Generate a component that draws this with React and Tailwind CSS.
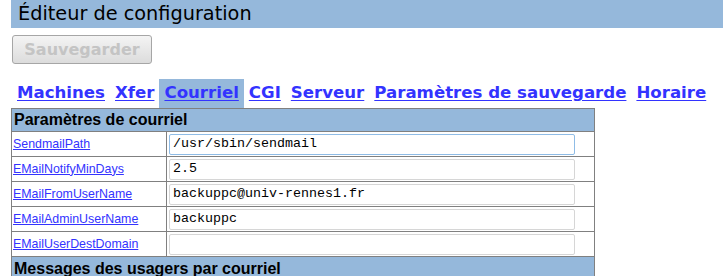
import React from "react";

const rows = [
  { name: "SendmailPath", value: "/usr/sbin/sendmail", focus: true },
  { name: "EMailNotifyMinDays", value: "2.5" },
  { name: "EMailFromUserName", value: "backuppc@univ-rennes1.fr" },
  { name: "EMailAdminUserName", value: "backuppc" },
  { name: "EMailUserDestDomain", value: "" },
];

const tabs = ["Machines", "Xfer", "Courriel", "CGI", "Serveur", "Paramètres de sauvegarde", "Horaire"];

export default function App() {
  return (
    <div className="w-[723px] h-[276px] overflow-hidden bg-white">
      <div className="ml-[11px] h-[28px] bg-[#95b8db] flex items-center pl-[7px] text-[19.3px] text-black leading-none font-['DejaVu_Sans',sans-serif]">
        Éditeur de configuration
      </div>
      <div className="mt-[7px] ml-[12px] w-[140px] h-[29px] rounded-[3px] border border-[#a6a6a6] bg-gradient-to-b from-[#f4f4f4] to-[#dcdcdc] flex items-center justify-center text-[16px] font-bold text-[#c4c4c4] leading-none font-['DejaVu_Sans',sans-serif]">
        Sauvegarder
      </div>
      <div className="mt-[15px] ml-[12px] flex h-[29px] items-stretch whitespace-nowrap font-['DejaVu_Sans',sans-serif] text-[16.6px] font-bold leading-none">
        {tabs.map((t) => (
          <div
            key={t}
            className={
              "flex shrink-0 items-center px-[5px] " + (t === "Courriel" ? "bg-[#95b8db]" : "")
            }
          >
            <a href="#" className="text-[#3333ff] underline underline-offset-[2px]">
              {t}
            </a>
          </div>
        ))}
      </div>
      <div className="ml-[11px] w-[584px] border-t border-l border-r border-[#808080]">
        <div className="h-[23px] bg-[#95b8db] border-b border-[#808080] flex items-center pl-[2px] text-[16px] font-bold text-black leading-none font-['Liberation_Sans',Arial,sans-serif]">
          Paramètres de courriel
        </div>
        {rows.map((r) => (
          <div key={r.name} className="flex h-[25px] border-b border-[#808080]">
            <div className="w-[155px] border-r border-[#808080] flex items-center pl-[1px]">
              <a
                href="#"
                className="text-[#3333ff] underline text-[12.4px] leading-none font-['Liberation_Sans',Arial,sans-serif]"
              >
                {r.name}
              </a>
            </div>
            <div className="flex-1 flex items-center pl-[2px]">
              <div
                className={
                  "w-[406px] h-[21px] rounded-[2px] border flex items-center pl-[3px] text-[13.33px] text-black leading-none font-['Liberation_Mono','Courier_New',monospace] " +
                  (r.focus ? "border-[#8fbce6]" : "border-[#d6d6d6]")
                }
              >
                {r.value}
              </div>
            </div>
          </div>
        ))}
        <div className="h-[23px] bg-[#95b8db] flex items-center pl-[2px] text-[16px] font-bold text-black leading-none font-['Liberation_Sans',Arial,sans-serif]">
          Messages des usagers par courriel
        </div>
      </div>
    </div>
  );
}
